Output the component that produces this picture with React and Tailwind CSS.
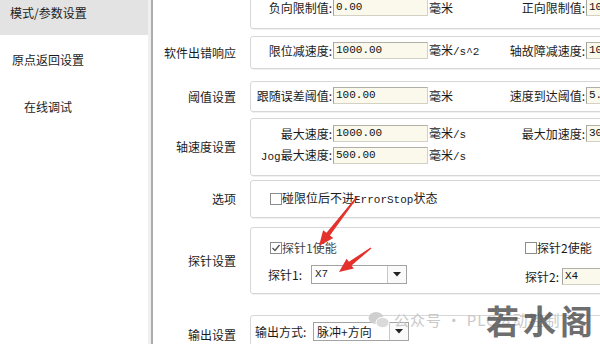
import React from "react";

const MONO = "font-['Liberation_Mono','Noto_Sans_CJK_SC',monospace]";

function Field({ value }) {
  return (
    <div
      className={`w-[95px] h-[17px] shrink-0 overflow-hidden whitespace-nowrap bg-[#fbf9ec] border border-[#d3d1c4] border-l-[#a4a49c] border-t-[#b0b0a8] pl-[2px] text-[11px] leading-[15px] text-[#111] ${MONO}`}
    >
      {value}
    </div>
  );
}

function Check({ checked }) {
  return (
    <div className="w-[12px] h-[12px] shrink-0 border border-[#8c8c8c] bg-white flex items-center justify-center">
      {checked && (
        <svg width="10" height="10" viewBox="0 0 10 10">
          <path d="M1.5 5 L4 7.5 L8.5 2" fill="none" stroke="#555" strokeWidth="1.4" />
        </svg>
      )}
    </div>
  );
}

function Combo({ value, mono }) {
  return (
    <div className="w-[96px] h-[19px] shrink-0 flex border border-[#a3a3a3] bg-white">
      <div className={`flex-1 pl-[3px] leading-[17px] ${mono ? `text-[11px] ${MONO}` : "text-[12px]"}`}>{value}</div>
      <div className="w-[19px] border-l border-[#c9c9c9] bg-[#fafafa] flex items-center justify-center">
        <svg width="8" height="5" viewBox="0 0 8 5">
          <path d="M0 0 L8 0 L4 4.5 Z" fill="#222" />
        </svg>
      </div>
    </div>
  );
}

function Row({ label, h, mt, children }) {
  return (
    <div className={`flex items-center shrink-0 ${mt}`}>
      <div className="w-[83px] text-right shrink-0">{label}</div>
      <div
        className={`ml-[14px] w-[430px] shrink-0 ${h} border border-[#d7d7d7] rounded-[3px] shadow-[1px_1px_0_#f1f1f1]`}
      >
        {children}
      </div>
    </div>
  );
}

function Line({ l1, v1, unit, l2, v2 }) {
  return (
    <div className="flex items-center h-[17px]">
      <div className="w-[82px] text-right pr-[1px] shrink-0 whitespace-nowrap">{l1}</div>
      <Field value={v1} />
      <div className="w-[58px] pl-[1px] shrink-0 whitespace-nowrap">{unit}</div>
      {l2 ? (
        <>
          <div className="w-[100px] text-right pr-[1px] shrink-0 whitespace-nowrap">{l2}</div>
          <Field value={v2} />
        </>
      ) : null}
    </div>
  );
}

function Arrow({ x1, y1, x2, y2, hl = 15, hw = 6.5 }) {
  const dx = x2 - x1;
  const dy = y2 - y1;
  const len = Math.hypot(dx, dy);
  const ux = dx / len;
  const uy = dy / len;
  const nx = -uy;
  const ny = ux;
  const bx = x2 - hl * ux;
  const by = y2 - hl * uy;
  const pts = [
    [x1 + 0.6 * nx, y1 + 0.6 * ny],
    [bx + 2.2 * nx, by + 2.2 * ny],
    [bx + hw * nx, by + hw * ny],
    [x2, y2],
    [bx - hw * nx, by - hw * ny],
    [bx - 2.2 * nx, by - 2.2 * ny],
    [x1 - 0.6 * nx, y1 - 0.6 * ny],
  ]
    .map((p) => p.map((v) => v.toFixed(1)).join(","))
    .join(" ");
  return <polygon points={pts} fill="#e4312b" />;
}

export default function App() {
  return (
    <div className="relative w-[600px] h-[344px] overflow-hidden bg-white flex text-[12px] text-[#1c1c1c] font-['Noto_Sans_CJK_SC','Noto_Sans',sans-serif]">
      <aside className="w-[148px] shrink-0 flex flex-col leading-[16px]">
        <div className="h-[35px] bg-[#e3e3e3] pl-[10px] pt-[5px]">模式/参数设置</div>
        <div className="pl-[12px] mt-[17px]">原点返回设置</div>
        <div className="pl-[24px] mt-[31px]">在线调试</div>
      </aside>
      <div className="w-[3px] shrink-0 bg-[#efefef]" />
      <div className="w-[2px] shrink-0 bg-[#acacac]" />

      <main className="flex-1 flex flex-col -mt-[4px] overflow-hidden leading-[16px]">
        <Row label="" h="h-[33px]" mt="">
          <div className="pt-[2px]">
            <Line l1="负向限制值:" v1="0.00" unit="毫米" l2="正向限制值:" v2="100.00" />
          </div>
        </Row>

        <Row label="软件出错响应" h="h-[33px]" mt="mt-[7px]">
          <div className="pt-[5px]">
            <Line
              l1="限位减速度:"
              v1="1000.00"
              unit={
                <>
                  毫米<span className={`text-[11px] ${MONO}`}>/s^2</span>
                </>
              }
              l2="轴故障减速度:"
              v2="1000.00"
            />
          </div>
        </Row>

        <Row label="阈值设置" h="h-[31px]" mt="mt-[12px]">
          <div className="pt-[5px]">
            <Line l1="跟随误差阈值:" v1="100.00" unit="毫米" l2="速度到达阈值:" v2="5.00" />
          </div>
        </Row>

        <Row label="轴速度设置" h="h-[58px]" mt="mt-[6px]">
          <div className="pt-[6px] flex flex-col gap-[5px]">
            <Line
              l1="最大速度:"
              v1="1000.00"
              unit={
                <>
                  毫米<span className={`text-[11px] ${MONO}`}>/s</span>
                </>
              }
              l2="最大加速度:"
              v2="3000.00"
            />
            <Line
              l1={
                <>
                  <span className={`text-[11px] ${MONO}`}>Jog</span>最大速度:
                </>
              }
              v1="500.00"
              unit={
                <>
                  毫米<span className={`text-[11px] ${MONO}`}>/s</span>
                </>
              }
            />
          </div>
        </Row>

        <Row label="选项" h="h-[38px]" mt="mt-[4px]">
          <div className="h-full flex items-center pl-[19px]">
            <Check />
            <span className="whitespace-nowrap">
              碰限位后不进<span className={`text-[11px] ${MONO}`}>ErrorStop</span>状态
            </span>
          </div>
        </Row>

        <Row label="探针设置" h="h-[67px]" mt="mt-[9px]">
          <div className="flex pt-[12px]">
            <div className="w-[274px] shrink-0 pl-[19px] flex flex-col">
              <div className="flex items-center h-[16px] text-[#444]">
                <Check checked />
                <span>探针1使能</span>
              </div>
              <div className="flex items-center mt-[9px] -ml-[2px]">
                <div className="w-[43px] shrink-0">探针1:</div>
                <Combo value="X7" mono />
              </div>
            </div>
            <div className="flex flex-col">
              <div className="flex items-center h-[16px]">
                <Check />
                <span>探针2使能</span>
              </div>
              <div className="flex items-center mt-[12px]">
                <div className="w-[37px] shrink-0">探针2:</div>
                <Field value="X4" />
              </div>
            </div>
          </div>
        </Row>

        <Row label="输出设置" h="h-[40px]" mt="mt-[21px]">
          <div className="flex items-center pt-[6px] pl-[4px]">
            <div className="w-[58px] shrink-0">输出方式:</div>
            <Combo value="脉冲+方向" />
          </div>
        </Row>
      </main>

      {/* annotation arrows */}
      <svg className="absolute inset-0 pointer-events-none" width="600" height="344" viewBox="0 0 600 344">
        <Arrow x1={357} y1={197} x2={319} y2={246} />
        <Arrow x1={371} y1={248} x2={339} y2={272} hl={14} hw={6} />
      </svg>

      {/* watermark */}
      <div className="absolute left-[368px] top-[309px] flex items-center gap-[4px] pointer-events-none">
        <svg width="22" height="18" viewBox="0 0 22 18">
          <ellipse cx="8" cy="7" rx="7.5" ry="6" fill="#cfcfcf" />
          <ellipse cx="14.5" cy="11.5" rx="6.5" ry="5.2" fill="#dadada" stroke="#fff" strokeWidth="1" />
        </svg>
        <span className="text-[15px] text-[#c9c9c9] whitespace-nowrap tracking-[1px]">公众号 · PLC运动控制</span>
      </div>
      <div className="absolute left-[486px] top-[300px] text-[33px] leading-[40px] font-bold text-[#4a4a4a] opacity-80 whitespace-nowrap tracking-[4px] pointer-events-none">
        若水阁
      </div>
    </div>
  );
}
